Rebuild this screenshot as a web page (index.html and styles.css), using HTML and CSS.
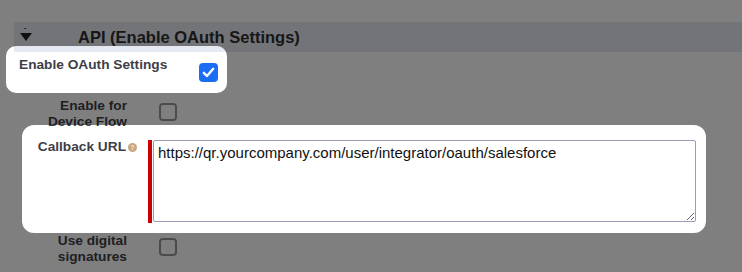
FILE: index.html
```html
<!DOCTYPE html>
<html lang="en">
<head>
    <meta charset="UTF-8">
    <title>API (Enable OAuth Settings)</title>
    <link rel="stylesheet" href="styles.css">
</head>
<body>
    <div class="page">
        <div class="section-head">
            <svg class="twisty" width="14" height="14" viewBox="0 0 14 14">
                <path d="M5.5 0.5h1.5" stroke="#222" stroke-width="1"/>
                <path d="M1 5h12L7 13z" fill="#222"/>
            </svg>
            <h3>API (Enable OAuth Settings)</h3>
        </div>

        <div class="oauth-row">
            <label class="oauth-label">Enable OAuth Settings</label>
            <span class="check checked">
                <svg width="13" height="11" viewBox="0 0 13 11">
                    <path d="M1.8 5.8l3.2 3.2 6.2-7.2" fill="none" stroke="#fff" stroke-width="2.4" stroke-linecap="round" stroke-linejoin="round"/>
                </svg>
            </span>
        </div>

        <div class="form-row row-device">
            <label class="label-col">Enable for<br>Device Flow</label>
            <div class="data-col"><span class="check"></span></div>
        </div>

        <div class="form-row row-callback">
            <label class="label-col label-help">Callback URL<span class="help-orb">?</span></label>
            <div class="data-col">
                <div class="required-input">
                    <span class="required-bar"></span>
                    <textarea class="url-box" spellcheck="false">https://qr.yourcompany.com/user/integrator/oauth/salesforce</textarea>
                </div>
            </div>
        </div>

        <div class="form-row row-sign">
            <label class="label-col">Use digital<br>signatures</label>
            <div class="data-col"><span class="check"></span></div>
        </div>
    </div>

    <!-- dimmed overlay with spotlight holes -->
    <svg class="spotlight" width="742" height="272" viewBox="0 0 742 272">
        <path fill="rgba(0,0,0,0.5)" fill-rule="evenodd" d="M0 0H742V272H0Z
            M16 46H217A10 10 0 0 1 227 56V83A10 10 0 0 1 217 93H16A10 10 0 0 1 6 83V56A10 10 0 0 1 16 46Z
            M34 125H694A12 12 0 0 1 706 137V221A12 12 0 0 1 694 233H34A12 12 0 0 1 22 221V137A12 12 0 0 1 34 125Z"/>
    </svg>
</body>
</html>
```

FILE: styles.css
```css
html, body {
    margin: 0;
    padding: 0;
}
body {
    width: 742px;
    height: 272px;
    position: relative;
    overflow: hidden;
    background-color: white;
    font-family: 'Liberation Sans', Arial, Helvetica, sans-serif;
    color: #3e3e48;
}
.page {
    padding-top: 22px;
}
.section-head {
    display: flex;
    align-items: flex-start;
    margin-left: 14px;
    height: 30px;
    background-color: #e6e9f1;
}
.twisty {
    margin-left: 5px;
    margin-top: 6px;
}
.section-head h3 {
    margin: 0 0 0 45px;
    font-size: 16.5px;
    line-height: 30px;
    font-weight: bold;
    color: #2e2e2e;
}
.oauth-row {
    display: flex;
    align-items: flex-start;
    box-sizing: border-box;
    height: 46px;
    padding-top: 5px;
    padding-left: 19px;
}
.oauth-label {
    width: 180px;
    font-size: 13.7px;
    line-height: 16px;
    font-weight: bold;
}
.check {
    display: inline-block;
    box-sizing: border-box;
    width: 18px;
    height: 18px;
    border: 2px solid #969696;
    border-radius: 4px;
    background-color: white;
    margin-left: 11px;
    margin-top: 5px;
}
.check.checked {
    display: flex;
    align-items: center;
    justify-content: center;
    width: 19px;
    height: 19px;
    margin-left: 0;
    margin-top: 6px;
    border: none;
    background-color: #1b6ef3;
}
.form-row {
    display: flex;
    align-items: flex-start;
}
.label-col {
    width: 138px;
    padding-right: 11px;
    box-sizing: border-box;
    text-align: right;
    font-size: 13.7px;
    line-height: 16px;
    font-weight: bold;
}
.label-help {
    padding-right: 1px;
}
.help-orb {
    display: inline-block;
    width: 9px;
    height: 9px;
    margin-left: 2px;
    border-radius: 50%;
    background-color: #c9a77f;
    color: #f3e6d4;
    font-size: 7px;
    line-height: 9px;
    text-align: center;
    vertical-align: 1px;
}
.data-col {
    margin-left: 10px;
}
.row-device {
    height: 41px;
}
.row-callback {
    height: 94px;
}
.required-input {
    display: flex;
    margin-top: 1px;
}
.required-bar {
    width: 4px;
    height: 83px;
    background-color: #c00;
    margin-right: 1px;
}
.url-box {
    width: 543px;
    height: 82px;
    box-sizing: border-box;
    margin: 0;
    padding: 3px 4px;
    border: 1px solid #9b9bb5;
    border-radius: 2px;
    font-family: 'Liberation Sans', Arial, Helvetica, sans-serif;
    font-size: 15px;
    color: #111;
    background-color: white;
    outline: none;
}
.spotlight {
    position: absolute;
    left: 0;
    top: 0;
    pointer-events: none;
}
```
